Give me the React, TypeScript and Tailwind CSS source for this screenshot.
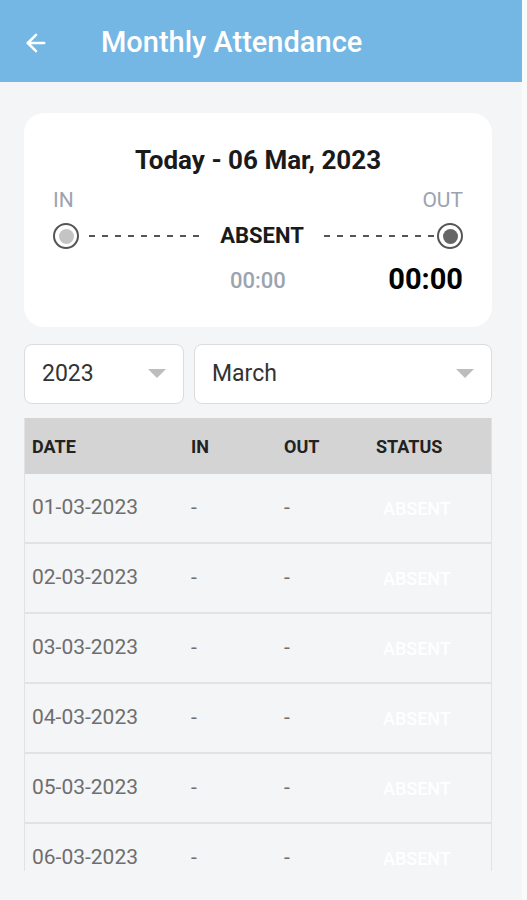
import { ArrowLeft } from "lucide-react";

const rows = [
  "01-03-2023",
  "02-03-2023",
  "03-03-2023",
  "04-03-2023",
  "05-03-2023",
  "06-03-2023",
];

function Dashes() {
  return (
    <svg className="block h-[4px] w-full" preserveAspectRatio="none">
      <line
        x1="0"
        y1="2"
        x2="100%"
        y2="2"
        stroke="#555"
        strokeWidth="2"
        strokeDasharray="6 7"
      />
    </svg>
  );
}

function Dot({ fill }: { fill: string }) {
  return (
    <div className="flex h-[26px] w-[26px] shrink-0 items-center justify-center rounded-full border-2 border-[#555]">
      <div className={`h-[15px] w-[15px] rounded-full ${fill}`} />
    </div>
  );
}

function Select({ label, className }: { label: string; className: string }) {
  return (
    <div
      className={`flex h-[60px] items-center justify-between rounded-lg border border-[#dcdcdc] bg-white pl-[17px] pr-[17px] ${className}`}
    >
      <span className="text-[23px] text-[#333]">{label}</span>
      <svg width="18" height="10" viewBox="0 0 18 10">
        <path d="M0 0 L18 0 L9 9 Z" fill="#bdbdbd" />
      </svg>
    </div>
  );
}

export default function App() {
  return (
    <div
      className="flex h-[900px] overflow-hidden bg-[#f4f5f7]"
      style={{ fontFamily: "Roboto, 'Liberation Sans', sans-serif" }}
    >
      <div className="flex min-w-0 flex-1 flex-col">
        <header className="flex h-[82px] items-center bg-[#74b7e4] px-[22px] pt-[3px] text-white">
          <ArrowLeft size={28} strokeWidth={2.2} />
          <h1 className="ml-[51px] text-[29px] font-medium">Monthly Attendance</h1>
        </header>

        <div className="flex flex-col pl-[24px] pr-[30px] pt-[31px]">
          <section className="flex h-[214px] flex-col rounded-[20px] bg-white px-[29px] pt-[33px]">
            <h2 className="text-center text-[26px] font-bold leading-[28px] text-[#1a1a1a]">
              Today - 06 Mar, 2023
            </h2>
            <div className="mt-[14px] flex justify-between text-[21px] leading-[24px] text-[#9ca3af]">
              <span>IN</span>
              <span>OUT</span>
            </div>
            <div className="mt-[11px] flex h-[26px] items-center">
              <Dot fill="bg-[#c4c4c4]" />
              <div className="ml-[10px] min-w-0 flex-1">
                <Dashes />
              </div>
              <span className="mx-[20px] text-[22px] font-bold leading-[26px] text-[#1a1a1a]">
                ABSENT
              </span>
              <div className="mr-[2px] min-w-0 flex-1">
                <Dashes />
              </div>
              <Dot fill="bg-[#666]" />
            </div>
            <div className="mt-[14px] flex h-[34px] items-center">
              <span className="ml-[177px] text-[22px] font-medium text-[#9ca3af]">00:00</span>
              <span className="ml-auto text-[29px] font-bold text-black">00:00</span>
            </div>
          </section>

          <div className="mt-[17px] flex gap-[10px]">
            <Select label="2023" className="w-[160px]" />
            <Select label="March" className="flex-1" />
          </div>

          <div className="mt-[14px] h-[453px] overflow-hidden border-x border-[#e2e2e2]">
            <div className="grid h-[56px] grid-cols-[159px_93px_92px_1fr] items-center bg-[#d4d4d4] text-[18px] font-bold text-[#222]">
              <span className="pl-[7px]">DATE</span>
              <span className="pl-[7px]">IN</span>
              <span className="pl-[7px]">OUT</span>
              <span className="pl-[7px]">STATUS</span>
            </div>
            {rows.map((d) => (
              <div
                key={d}
                className="grid h-[70px] grid-cols-[159px_93px_92px_1fr] items-center border-b-2 border-[#e2e2e2] text-[21px] text-[#6e6e6e]"
              >
                <span className="pl-[7px]">{d}</span>
                <span className="pl-[7px]">-</span>
                <span className="pl-[7px]">-</span>
                <span className="pl-[14px] text-[18px] font-medium text-white">ABSENT</span>
              </div>
            ))}
          </div>
        </div>
      </div>
      <div className="w-[5px] bg-[#fafafa]" />
    </div>
  );
}
